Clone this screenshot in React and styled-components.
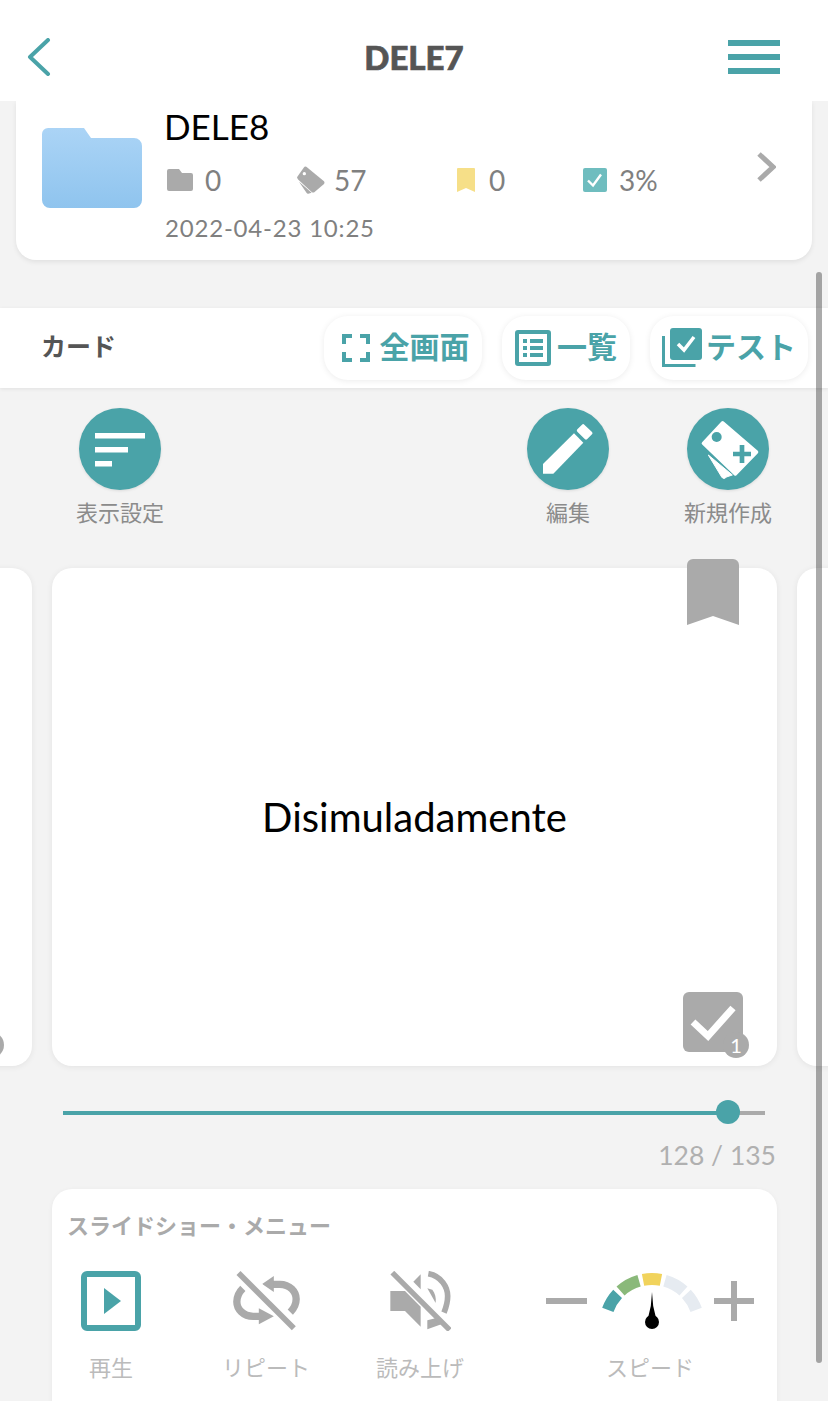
import React from "react";
import styled, { createGlobalStyle } from "styled-components";

const TEAL = "#4aa3a8";
const SANS = `Lato, "Noto Sans CJK JP", sans-serif`;
const JP = `"Noto Sans CJK JP", "Noto Sans", sans-serif`;

const Global = createGlobalStyle`
  html, body { margin: 0; padding: 0; background: #f3f3f3; }
  * { box-sizing: border-box; }
`;

const Page = styled.div`
  position: relative;
  width: 828px;
  height: 1401px;
  overflow: hidden;
  background: #f3f3f3;
  font-family: ${SANS};
`;
const Header = styled.header`
  position: relative;
  z-index: 2;
  height: 101px;
  background: #fff;
  display: flex;
  align-items: center;
  justify-content: space-between;
  padding: 13px 48px 0 27px;
`;
const HeaderTitle = styled.h1`
  position: absolute;
  left: 0;
  right: 0;
  top: 37px;
  margin: 0;
  text-align: center;
  font-size: 33px;
  line-height: 40px;
  font-weight: 900;
  color: #555;
  -webkit-text-stroke: 0.7px #555;
`;
const Menu = styled.div`
  width: 52px;
  display: flex;
  flex-direction: column;
  gap: 8px;
`;
const MenuBar = styled.span`
  display: block;
  height: 6px;
  background: ${TEAL};
`;
const InfoCard = styled.section`
  margin: 0 16px;
  height: 159px;
  background: #fff;
  border-radius: 0 0 20px 20px;
  box-shadow: 0 2px 5px rgba(0, 0, 0, 0.08);
  display: flex;
  align-items: flex-start;
  padding: 27px 36px 0 26px;
`;
const InfoBody = styled.div`
  flex: 1;
  margin: -27px 0 0 23px;
`;
const InfoName = styled.div`
  margin-left: -1px;
  font-size: 35px;
  line-height: 50px;
  color: #000;
`;
const Stats = styled.div`
  display: grid;
  grid-template-columns: 130px 160px 126px auto;
  margin-top: 11px;
  height: 36px;
  align-items: center;
`;
const Stat = styled.div`
  display: flex;
  align-items: center;
  gap: ${(p) => p.$gap ?? 12}px;
  font-size: 28px;
  color: #808080;
  padding-left: 2px;
`;
const InfoDate = styled.div`
  margin-top: 14px;
  font-size: 24px;
  line-height: 32px;
  letter-spacing: 0.8px;
  color: #808080;
`;
const InfoChevron = styled.svg`
  margin-top: 24px;
`;
const Toolbar = styled.section`
  margin-top: 48px;
  height: 80px;
  background: #fff;
  box-shadow: 0 1px 4px rgba(0, 0, 0, 0.08);
  display: flex;
  align-items: center;
  padding: 0 20px 0 41px;
  gap: 20px;
`;
const ToolbarLabel = styled.div`
  flex: 1;
  margin-top: -6px;
  font-family: ${JP};
  font-size: 25px;
  font-weight: 700;
  color: #555;
`;
const ToolButton = styled.div`
  width: ${(p) => p.$w}px;
  height: 64px;
  padding-left: ${(p) => p.$pad ?? 0}px;
  border-radius: 24px;
  background: #fff;
  box-shadow: 0 1px 6px rgba(0, 0, 0, 0.08);
  display: flex;
  align-items: center;
  justify-content: center;
  gap: ${(p) => p.$gap ?? 8}px;
`;
const ToolText = styled.span`
  margin-top: -6px;
  font-family: ${JP};
  font-size: 30px;
  font-weight: 700;
  color: ${TEAL};
  white-space: nowrap;
`;
const Actions = styled.section`
  margin-top: 20px;
  height: 160px;
  display: grid;
  grid-template-columns: 448px 160px 160px;
  padding-left: 40px;
`;
const Action = styled.div`
  width: 160px;
  display: flex;
  flex-direction: column;
  align-items: center;
  gap: 6px;
`;
const ActionCircle = styled.div`
  width: 82px;
  height: 82px;
  border-radius: 50%;
  background: ${TEAL};
  box-shadow: 0 1px 3px rgba(0, 0, 0, 0.1);
  display: flex;
  align-items: center;
  justify-content: center;
`;
const ActionLabel = styled.div`
  font-family: ${JP};
  font-size: 22px;
  line-height: 30px;
  color: #8b8b8b;
`;
const Carousel = styled.section`
  display: flex;
  gap: 20px;
  height: 498px;
  margin-left: -693px;
`;
const Card = styled.article`
  position: relative;
  flex: 0 0 725px;
  height: 498px;
  background: #fff;
  border-radius: 20px;
  box-shadow: 0 1px 6px rgba(0, 0, 0, 0.07);
  display: flex;
  align-items: center;
  justify-content: center;
  font-size: 40px;
  color: #000;
`;
const CardBookmark = styled.svg`
  position: absolute;
  top: -9px;
  right: 38px;
`;
const CardCheck = styled.div`
  position: absolute;
  right: 34px;
  bottom: 14px;
  width: 60px;
  height: 60px;
  border-radius: 6px;
  background: #aaa;
  display: flex;
  align-items: center;
  justify-content: center;
`;
const CheckBadge = styled.div`
  position: absolute;
  right: -6px;
  bottom: -6px;
  width: 26px;
  height: 26px;
  border-radius: 50%;
  background: #aaa;
  color: #fff;
  font-size: 20px;
  line-height: 26px;
  text-align: center;
`;
const Slider = styled.div`
  position: relative;
  margin: 45px 0 0 63px;
  width: 702px;
  height: 4px;
  background: #aaa;
`;
const SliderFill = styled.div`
  height: 100%;
  background: ${TEAL};
`;
const SliderThumb = styled.div`
  position: absolute;
  top: -11px;
  width: 24px;
  height: 24px;
  margin-left: -12px;
  border-radius: 50%;
  background: ${TEAL};
`;
const Count = styled.div`
  margin: 24px 52px 0 0;
  text-align: right;
  font-size: 26.500px;
  line-height: 32px;
  color: #b0b0b0;
`;
const Panel = styled.section`
  margin: 18px 51px 0 52px;
  height: 240px;
  background: #fff;
  border-radius: 20px;
  box-shadow: 0 1px 5px rgba(0, 0, 0, 0.05);
  padding: 20px 0 0 16px;
`;
const PanelTitle = styled.div`
  margin-left: -1px;
  font-family: ${JP};
  font-size: 22px;
  line-height: 30px;
  font-weight: 700;
  color: #aaa;
`;
const PanelRow = styled.div`
  margin-top: 32px;
  display: flex;
`;
const PanelItem = styled.div`
  display: flex;
  flex-direction: column;
  align-items: center;
  gap: 18px;
  width: ${(p) => p.$w}px;
  margin-left: ${(p) => p.$ml ?? 0}px;
`;
const PanelIcon = styled.div`
  height: 60px;
  display: flex;
  align-items: center;
  justify-content: center;
`;
const PanelLabel = styled.div`
  font-family: ${JP};
  font-size: 22px;
  line-height: 34px;
  color: #bbb;
  white-space: nowrap;
`;
const Scrollbar = styled.div`
  position: absolute;
  z-index: 3;
  left: 816px;
  top: 272px;
  width: 6px;
  height: 1091px;
  border-radius: 3px;
  background: rgba(0, 0, 0, 0.33);
`;

const polar = (a, r) => {
  const t = (a * Math.PI) / 180;
  return [55 + r * Math.sin(t), 55 - r * Math.cos(t)];
};
const arc = (a, b, r = 47) => {
  const [x1, y1] = polar(a, r);
  const [x2, y2] = polar(b, r);
  return `M${x1} ${y1}A${r} ${r} 0 0 1 ${x2} ${y2}`;
};

const BackIcon = () => (
  <svg width="24" height="38" viewBox="0 0 24 38" fill="none">
    <path d="M21 2 3 19l18 17" stroke={TEAL} strokeWidth="4" strokeLinecap="round" strokeLinejoin="round" />
  </svg>
);
const BigFolder = () => (
  <svg width="100" height="80" viewBox="0 0 100 80">
    <defs>
      <linearGradient id="fold" x1="0" y1="0" x2="0" y2="1">
        <stop offset="0" stopColor="#abd4f6" />
        <stop offset="1" stopColor="#8fc4ee" />
      </linearGradient>
    </defs>
    <path d="M6 0h36l7 10h43a8 8 0 0 1 8 8v54a8 8 0 0 1-8 8H8a8 8 0 0 1-8-8V6a6 6 0 0 1 6-6z" fill="url(#fold)" />
  </svg>
);
const SmallFolder = () => (
  <svg width="26" height="22" viewBox="0 0 26 22">
    <path d="M2 0h10l3 4h9a2 2 0 0 1 2 2v14a2 2 0 0 1-2 2H2a2 2 0 0 1-2-2V2a2 2 0 0 1 2-2z" fill="#aaa" />
  </svg>
);
const TagIcon = () => (
  <svg width="28" height="28" viewBox="408 35 84 84">
    <path d="M428 40q3-4 8-3l52 43q5 5 0 10l-28 24q-4 2-8-1L412 76q-5-5-3-9z" fill="#aaa" />
    <path d="M414 82l38 33-10 3q-3 1-5-2z" fill="#aaa" />
    <circle cx="430" cy="58" r="5" fill="#fff" />
  </svg>
);
const MiniBookmark = () => (
  <svg width="18" height="24" viewBox="0 0 18 24">
    <path d="M1 0h16a1 1 0 0 1 1 1v23l-9-4-9 4V1a1 1 0 0 1 1-1z" fill="#f6df88" />
  </svg>
);
const MiniCheck = () => (
  <svg width="24" height="24" viewBox="0 0 24 24">
    <rect width="24" height="24" rx="2" fill="#6fbdbf" />
    <path d="M5 12.500l5 5 8-11" fill="none" stroke="#fff" strokeWidth="2.400" />
  </svg>
);
const Chevron = () => (
  <InfoChevron width="20" height="30" viewBox="0 0 20 30" fill="none">
    <path d="M3 2l14 13L3 28" stroke="#aaa" strokeWidth="5" />
  </InfoChevron>
);
const FullIcon = () => (
  <svg width="28" height="28" viewBox="0 0 28 28" fill="none" stroke={TEAL} strokeWidth="4">
    <path d="M10 2H2v8M18 2h8v8M10 26H2v-8M18 26h8v-8" />
  </svg>
);
const ListIcon = () => (
  <svg width="36" height="36" viewBox="0 0 36 36">
    <rect x="2" y="2" width="32" height="32" rx="1" fill="#fff" stroke={TEAL} strokeWidth="4" />
    <path d="M8 9h4v4H8zM8 16h4v4H8zM8 23h4v4H8zM15 9h13v4H15zM15 16h13v4H15zM15 23h13v4H15z" fill={TEAL} />
  </svg>
);
const TestIcon = () => (
  <svg width="40" height="40" viewBox="0 0 40 40">
    <path d="M1.500 8v29.500h32" fill="none" stroke={TEAL} strokeWidth="3" />
    <rect x="8" y="0" width="32" height="32" rx="3" fill={TEAL} />
    <path d="M16 16l6 6 10-13" fill="none" stroke="#fff" strokeWidth="3.500" />
  </svg>
);
const SortIcon = () => (
  <svg width="82" height="82" viewBox="0 0 82 82" fill="#fff">
    <rect x="16" y="25" width="50" height="5.500" />
    <rect x="16" y="39" width="33" height="5.500" />
    <rect x="16" y="53" width="17" height="5.500" />
  </svg>
);
const PencilIcon = () => (
  <svg width="82" height="82" viewBox="81 24 246 246" fill="#fff">
    <path d="M129 192l93-92 28 28-90 93h-31z" />
    <path d="M232 88l14-14a5 5 0 0 1 7 0l23 22a5 5 0 0 1 0 7l-15 15a5 5 0 0 1-6 0l-23-23a5 5 0 0 1 0-7z" />
  </svg>
);
const NewCardIcon = () => (
  <svg width="82" height="82" viewBox="561 24 246 246">
    <path d="M668 68l102 88-64 66-96-92z" fill="#fff" stroke="#fff" strokeWidth="10" strokeLinejoin="round" />
    <path d="M625 165l72 60-18 6a8 8 0 0 1-14 0z" fill="#fff" stroke="#fff" strokeWidth="3" strokeLinejoin="round" />
    <circle cx="650" cy="111" r="15" fill={TEAL} />
    <path d="M719 135h14v20h20v14h-20v20h-14v-20h-20v-14h20z" fill={TEAL} />
  </svg>
);
const CardMark = () => (
  <CardBookmark width="52" height="66" viewBox="0 0 52 66">
    <path d="M6 0h40a6 6 0 0 1 6 6v60l-26-9-26 9V6a6 6 0 0 1 6-6z" fill="#aaa" />
  </CardBookmark>
);
const CardTick = ({ count }) => (
  <CardCheck>
    <svg width="48" height="40" viewBox="0 0 48 40" fill="none">
      <path d="M4 20l15 14L44 6" stroke="#fff" strokeWidth="7" />
    </svg>
    <CheckBadge>{count}</CheckBadge>
  </CardCheck>
);
const PlayIcon = () => (
  <svg width="60" height="60" viewBox="0 0 60 60">
    <rect x="3" y="3" width="54" height="54" rx="3" fill="#fff" stroke={TEAL} strokeWidth="6" />
    <path d="M23 17l17 13-17 13z" fill={TEAL} />
  </svg>
);
const RepeatOff = () => (
  <svg width="67" height="60" viewBox="40 36 200 180" fill="none">
    <path d="M155 76h25c30 0 49 22 49 44 0 16-8 30-18 40" stroke="#aaa" strokeWidth="22" />
    <path d="M127 75l35-24v48z" fill="#aaa" />
    <path d="M125 172h-25c-30 0-49-22-49-44 0-16 8-30 18-40" stroke="#aaa" strokeWidth="22" />
    <path d="M162 172l-45-24v48z" fill="#aaa" />
    <path d="M66 34l166 166" stroke="#fff" strokeWidth="28" />
    <path d="M56 42l166 166" stroke="#aaa" strokeWidth="17" />
  </svg>
);
const SpeakerOff = () => (
  <svg width="61" height="60" viewBox="514 30 181 180" fill="none">
    <path d="M514 90h44l47 47v60l-47-47h-44z" fill="#aaa" />
    <path d="M583 62l22-22v45z" fill="#aaa" />
    <path d="M628 38c40 7 58 42 58 67 0 20-5 35-11 50" stroke="#aaa" strokeWidth="17" />
    <path d="M625 82l15 4c8 10 12 25 10 40z" fill="#aaa" />
    <path d="M625 178l30-8 12 20-42 15z" fill="#aaa" />
    <path d="M520 35l172 172" stroke="#aaa" strokeWidth="16" />
  </svg>
);
const Gauge = () => (
  <svg width="210" height="60" viewBox="-52 0 210 60" fill="none">
    <path d="M-51 30h41M117 30h40M137 10v40" stroke="#aaa" strokeWidth="6" />
    <g strokeWidth="12">
      <path d={arc(-70, -47)} stroke="#4aa3a8" />
      <path d={arc(-42, -16)} stroke="#8ab97a" />
      <path d={arc(-11, 11)} stroke="#f1d35c" />
      <path d={arc(16, 42)} stroke="#e6ebf1" />
      <path d={arc(47, 70)} stroke="#e6ebf1" />
    </g>
    <path d="M55 21l1.200 14 2.800 12h-8l2.800-12z" fill="#000" />
    <circle cx="55" cy="51" r="7" fill="#000" />
  </svg>
);

export default function App() {
  return (
    <Page>
      <Global />
      <Header>
        <BackIcon />
        <HeaderTitle>DELE7</HeaderTitle>
        <Menu>
          <MenuBar />
          <MenuBar />
          <MenuBar />
        </Menu>
      </Header>
      <InfoCard>
        <BigFolder />
        <InfoBody>
          <InfoName>DELE8</InfoName>
          <Stats>
            <Stat><SmallFolder />0</Stat>
            <Stat $gap={9}><TagIcon />57</Stat>
            <Stat $gap={14}><MiniBookmark />0</Stat>
            <Stat><MiniCheck />3%</Stat>
          </Stats>
          <InfoDate>2022-04-23 10:25</InfoDate>
        </InfoBody>
        <Chevron />
      </InfoCard>
      <Toolbar>
        <ToolbarLabel>カード</ToolbarLabel>
        <ToolButton $w={158} $gap={10} $pad={5}><FullIcon /><ToolText>全画面</ToolText></ToolButton>
        <ToolButton $w={128} $gap={6}><ListIcon /><ToolText>一覧</ToolText></ToolButton>
        <ToolButton $w={158} $gap={4}><TestIcon /><ToolText>テスト</ToolText></ToolButton>
      </Toolbar>
      <Actions>
        <Action>
          <ActionCircle><SortIcon /></ActionCircle>
          <ActionLabel>表示設定</ActionLabel>
        </Action>
        <Action>
          <ActionCircle><PencilIcon /></ActionCircle>
          <ActionLabel>編集</ActionLabel>
        </Action>
        <Action>
          <ActionCircle><NewCardIcon /></ActionCircle>
          <ActionLabel>新規作成</ActionLabel>
        </Action>
      </Actions>
      <Carousel>
        <Card><CardMark /><CardTick /></Card>
        <Card><CardMark /><CardTick count={1} />Disimuladamente</Card>
        <Card><CardMark /><CardTick /></Card>
      </Carousel>
      <Slider>
        <SliderFill style={{ width: `${(665 / 702) * 100}%` }} />
        <SliderThumb style={{ left: `${(665 / 702) * 100}%` }} />
      </Slider>
      <Count>128 / 135</Count>
      <Panel>
        <PanelTitle>スライドショー・メニュー</PanelTitle>
        <PanelRow>
          <PanelItem $w={86}>
            <PanelIcon><PlayIcon /></PanelIcon>
            <PanelLabel>再生</PanelLabel>
          </PanelItem>
          <PanelItem $w={100} $ml={62}>
            <PanelIcon><RepeatOff /></PanelIcon>
            <PanelLabel>リピート</PanelLabel>
          </PanelItem>
          <PanelItem $w={100} $ml={54}>
            <PanelIcon><SpeakerOff /></PanelIcon>
            <PanelLabel>読み上げ</PanelLabel>
          </PanelItem>
          <PanelItem $w={210} $ml={75}>
            <PanelIcon><Gauge /></PanelIcon>
            <PanelLabel>スピード</PanelLabel>
          </PanelItem>
        </PanelRow>
      </Panel>
      <Scrollbar />
    </Page>
  );
}
